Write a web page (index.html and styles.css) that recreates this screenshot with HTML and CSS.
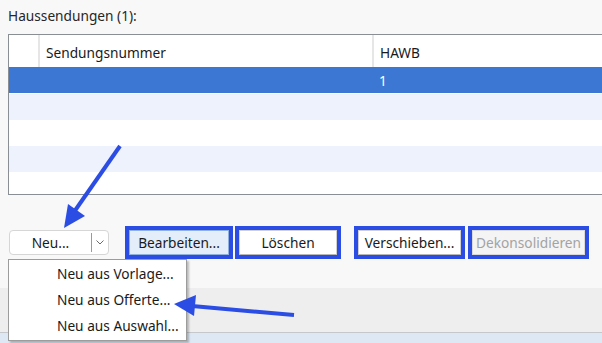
FILE: index.html
```html
<!DOCTYPE html>
<html lang="de">
<head>
    <meta charset="UTF-8">
    <title>Haussendungen</title>
    <link rel="stylesheet" href="styles.css">
</head>
<body>
    <div class="panel">
        <div class="title">Haussendungen (1):</div>

        <div class="grid">
            <div class="row head">
                <div class="cell rowhead"></div>
                <div class="cell col-nr">Sendungsnummer</div>
                <div class="cell col-hawb">HAWB</div>
            </div>
            <div class="row selected">
                <div class="cell rowhead"></div>
                <div class="cell col-nr"></div>
                <div class="cell col-hawb">1</div>
            </div>
            <div class="row alt"></div>
            <div class="row"></div>
            <div class="row alt"></div>
            <div class="row"></div>
        </div>

        <div class="actions">
            <div class="split">
                <span class="split-main">Neu...</span>
                <span class="split-arrow">
                    <svg width="8" height="5" viewBox="0 0 8 5"><path d="M0.5 0.5 L4 4 L7.5 0.5" fill="none" stroke="#6b6b6b" stroke-width="1"/></svg>
                </span>
            </div>
            <button class="btn default marked">Bearbeiten...</button>
            <button class="btn marked btn-del">Löschen</button>
            <button class="btn marked btn-move">Verschieben...</button>
            <button class="btn marked btn-off" disabled>Dekonsolidieren</button>
        </div>
    </div>

    <div class="footer"></div>
    <div class="statusbar"></div>

    <ul class="menu">
        <li>Neu aus Vorlage...</li>
        <li>Neu aus Offerte...</li>
        <li>Neu aus Auswahl...</li>
    </ul>

    <!-- annotation arrows -->
    <svg class="marks" width="602" height="343" viewBox="0 0 602 343">
        <line x1="120" y1="146" x2="74" y2="212" stroke="#2b4de3" stroke-width="4"/>
        <polygon points="64,228 68,204 85,216" fill="#2b4de3"/>
        <line x1="294" y1="315" x2="192" y2="306" stroke="#2b4de3" stroke-width="4"/>
        <polygon points="174,304 196,295 194,316" fill="#2b4de3"/>
    </svg>
</body>
</html>
```

FILE: styles.css
```css
body {
    margin: 0;
    width: 602px;
    height: 343px;
    overflow: hidden;
    position: relative;
    background-color: #f8f8f8;
    font-family: 'Noto Sans', 'Open Sans', sans-serif;
    font-size: 13.7px;
    color: #1a1a1a;
}

.panel {
    height: 288px;
}

.title {
    height: 34px;
    line-height: 20px;
    padding: 6px 0 0 8px;
    box-sizing: border-box;
    color: #262626;
}

.grid {
    margin-left: 8px;
    width: 594px;
    height: 161px;
    border: 1px solid #8a8f96;
    border-right: none;
    background-color: #ffffff;
    box-sizing: border-box;
    overflow: hidden;
}

.row {
    display: flex;
    height: 26px;
    background-color: #ffffff;
}

.row.alt {
    background-color: #edf2fc;
}

.row.head {
    height: 32px;
    align-items: stretch;
}

.row.selected {
    height: 27px;
    background-color: #3c77d4;
    border-bottom: 1px solid #ffffff;
    box-sizing: border-box;
    color: #ffffff;
}

.cell {
    display: flex;
    align-items: center;
    padding-left: 6px;
    box-sizing: border-box;
}

.rowhead {
    width: 29px;
    padding: 0;
}

.col-nr {
    width: 334px;
}

.head .col-nr,
.head .col-hawb {
    border-left: 2px solid #e6e6e6;
    padding-top: 3px;
}

.col-hawb {
    flex: 1;
}

.selected .col-hawb {
    padding-left: 7px;
}

.actions {
    display: flex;
    align-items: center;
    margin-top: 35px;
    padding-left: 9px;
}

.split {
    display: flex;
    align-items: center;
    width: 100px;
    height: 25px;
    background-color: #ffffff;
    border: 1px solid #d6d6d6;
    border-radius: 4px;
    box-sizing: border-box;
}

.split-main {
    width: 81px;
    text-align: center;
    border-right: 1px solid #9a9a9a;
    line-height: 19px;
}

.split-arrow {
    flex: 1;
    display: flex;
    justify-content: center;
}

.btn {
    height: 25px;
    margin-left: 10px;
    padding: 0;
    font-family: inherit;
    font-size: 13.7px;
    color: #1a1a1a;
    background-color: #ffffff;
    border: 1px solid #d0d0d0;
    border-bottom-color: #b8b8b8;
    border-radius: 0;
    box-sizing: border-box;
}

.btn.marked {
    outline: 4px solid #2b4de3;
}

.btn.default {
    width: 100px;
    margin-left: 20px;
    background-color: #e3eefa;
    border-color: #8fb1dc;
}

.btn-del {
    width: 98px;
}

.btn-move {
    width: 103px;
    margin-left: 21px;
}

.btn-off {
    width: 113px;
    margin-left: 11px;
    color: #a3a3a3;
    background-color: #f4f4f4;
    border-color: #d9d9d9;
}

.footer {
    height: 44px;
    background-color: #eeeeee;
    border-bottom: 1px solid #c4c8cd;
}

.statusbar {
    height: 10px;
    background-color: #dde8f4;
}

.menu {
    position: absolute;
    left: 8px;
    top: 259px;
    width: 179px;
    margin: 0;
    padding: 1px 0;
    list-style: none;
    background-color: #ffffff;
    border: 1px solid #9c9c9c;
    box-shadow: 2px 2px 2px rgba(0, 0, 0, 0.25);
    box-sizing: border-box;
}

.menu li {
    height: 26px;
    line-height: 26px;
    padding-left: 48px;
    color: #1a1a1a;
}

.marks {
    position: absolute;
    left: 0;
    top: 0;
    pointer-events: none;
}
```
